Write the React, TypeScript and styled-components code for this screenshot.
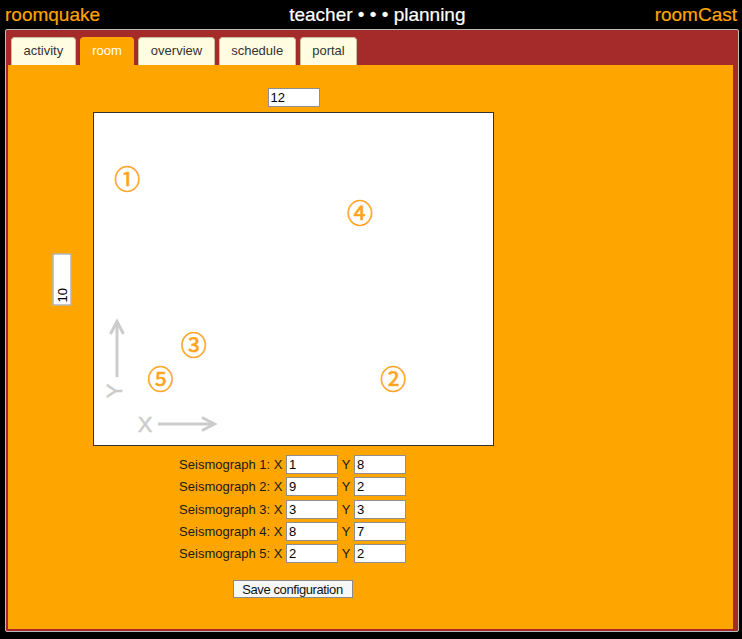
import React from "react";
import styled, { createGlobalStyle } from "styled-components";

const GlobalStyle = createGlobalStyle`
  html, body {
    margin: 0;
    padding: 0;
    background: #000;
    font-family: "Liberation Sans", Arial, sans-serif;
  }
`;

const Page = styled.div`
  width: 742px;
  height: 639px;
  background: #000;
  overflow: hidden;
`;

const Header = styled.header`
  display: flex;
  justify-content: space-between;
  align-items: flex-start;
  height: 29px;
  padding: 0 5px;
  box-sizing: border-box;
`;

const HeaderText = styled.span<{ $brand?: boolean }>`
  font-size: 19px;
  line-height: 30px;
  color: ${(p) => (p.$brand ? "#ffa500" : "#ffffff")};
  white-space: pre;
  -webkit-text-stroke: 0.2px currentColor;
`;

const Frame = styled.div`
  margin: 0 3px 0 5px;
  background: #a52b2b;
  border: 1px solid #b9b9b9;
  border-radius: 2px;
  padding: 7px 5px 2px 2px;
`;

const TabBar = styled.nav`
  display: flex;
  gap: 4px;
  padding-left: 3px;
`;

const Tab = styled.div<{ $active?: boolean }>`
  height: 28px;
  box-sizing: border-box;
  padding: 0 11.5px;
  line-height: 26px;
  font-size: 13px;
  border: 1px solid ${(p) => (p.$active ? "#ffa500" : "#cdbf9c")};
  border-bottom: none;
  border-radius: 4px 4px 0 0;
  background: ${(p) => (p.$active ? "#ffa500" : "#fffce1")};
  color: ${(p) => (p.$active ? "#ffffff" : "#333333")};
`;

const Content = styled.main`
  background: #ffa500;
  padding: 23px 0 31px 0;
`;

const Layout = styled.div`
  display: grid;
  grid-template-columns: 85px 401px;
  align-items: center;
`;

const TopCell = styled.div`
  grid-column: 2;
  display: flex;
  justify-content: center;
  margin-bottom: 5px;
`;

const SideCell = styled.div`
  grid-column: 1;
  display: flex;
  justify-content: flex-end;
  padding-right: 5px;
`;

const NumInput = styled.input<{ $vertical?: boolean }>`
  width: 52px;
  height: 19px;
  box-sizing: border-box;
  border: 1px solid #8f8f8f;
  background: #fff;
  padding: 0 2px;
  margin: 0;
  font-family: "Liberation Sans", Arial, sans-serif;
  font-size: 13px;
  color: #000;
  outline: none;
  transform: ${(p) => (p.$vertical ? "rotate(-90deg)" : "none")};
`;

const Room = styled.div`
  grid-column: 2;
  position: relative;
  width: 401px;
  height: 334px;
  box-sizing: border-box;
  background: #fff;
  border: 1px solid #333;
`;

const Axes = styled.svg`
  position: absolute;
  left: 0;
  top: 0;
  width: 399px;
  height: 332px;
`;

const Marker = styled.span`
  position: absolute;
  transform: translate(-50%, -50%);
  font-family: "Noto Sans CJK JP", "DejaVu Sans", sans-serif;
  font-size: 26px;
  line-height: 1;
  color: #ffa41c;
  -webkit-text-stroke: 0.6px #ffa41c;
`;

const Form = styled.div`
  grid-column: 2;
  display: flex;
  flex-direction: column;
  align-items: center;
  margin-top: 9px;
  padding-right: 2px;
`;

const Rows = styled.div`
  display: flex;
  flex-direction: column;
  gap: 3.25px;
`;

const Row = styled.div`
  display: flex;
  align-items: center;
  justify-content: center;
  gap: 3.6px;
  height: 19px;
  font-size: 13px;
  color: #1a1a1a;
`;

const SaveButton = styled.button`
  margin-top: 17px;
  width: 120px;
  height: 18px;
  padding: 0;
  box-sizing: border-box;
  border: 1px solid #8a8a8a;
  background: #f7f7f7;
  font-family: "Liberation Sans", Arial, sans-serif;
  font-size: 13px;
  letter-spacing: -0.4px;
  color: #111;
`;

const tabs = ["activity", "room", "overview", "schedule", "portal"];

const seismographs = [
  { x: 1, y: 8 },
  { x: 9, y: 2 },
  { x: 3, y: 3 },
  { x: 8, y: 7 },
  { x: 2, y: 2 },
];

const circled = ["①", "②", "③", "④", "⑤"];

const ROOM_W = 12;
const ROOM_H = 10;
const PX_W = 399;
const PX_H = 332;

export default function App() {
  return (
    <Page>
      <GlobalStyle />
      <Header>
        <HeaderText $brand>roomquake</HeaderText>
        <HeaderText>teacher • • • planning</HeaderText>
        <HeaderText $brand>roomCast</HeaderText>
      </Header>
      <Frame>
        <TabBar>
          {tabs.map((t) => (
            <Tab key={t} $active={t === "room"}>
              {t}
            </Tab>
          ))}
        </TabBar>
        <Content>
          <Layout>
            <TopCell>
              <NumInput defaultValue="12" />
            </TopCell>
            <SideCell>
              <NumInput $vertical defaultValue="10" />
            </SideCell>
            <Room>
              <Axes viewBox="0 0 399 332">
                <g stroke="#cccccc" strokeWidth="3" fill="none" strokeLinecap="butt">
                  <line x1="23" y1="264" x2="23" y2="209" />
                  <polyline points="16.5,221 23,208.5 29.5,221" />
                  <line x1="64" y1="311" x2="120" y2="311" />
                  <polyline points="108,304.5 120.5,311 108,317.5" />
                </g>
                <text
                  x="51"
                  y="319"
                  textAnchor="middle"
                  fill="#cccccc"
                  stroke="#cccccc"
                  strokeWidth="0.5"
                  fontSize="22"
                  fontFamily="Liberation Sans, Arial, sans-serif"
                >
                  X
                </text>
                <text
                  x="0"
                  y="0"
                  textAnchor="middle"
                  fill="#cccccc"
                  stroke="#cccccc"
                  strokeWidth="0.5"
                  fontSize="22"
                  fontFamily="Liberation Sans, Arial, sans-serif"
                  transform="translate(28 278) rotate(-90)"
                >
                  Y
                </text>
              </Axes>
              {seismographs.map((s, i) => (
                <Marker
                  key={i}
                  style={{
                    left: (s.x * PX_W) / ROOM_W,
                    top: PX_H - (s.y * PX_H) / ROOM_H - 1,
                  }}
                >
                  {circled[i]}
                </Marker>
              ))}
            </Room>
            <Form>
              <Rows>
                {seismographs.map((s, i) => (
                  <Row key={i}>
                    <span>Seismograph {i + 1}: X</span>
                    <NumInput defaultValue={String(s.x)} />
                    <span>Y</span>
                    <NumInput defaultValue={String(s.y)} />
                  </Row>
                ))}
              </Rows>
              <SaveButton>Save configuration</SaveButton>
            </Form>
          </Layout>
        </Content>
      </Frame>
    </Page>
  );
}
